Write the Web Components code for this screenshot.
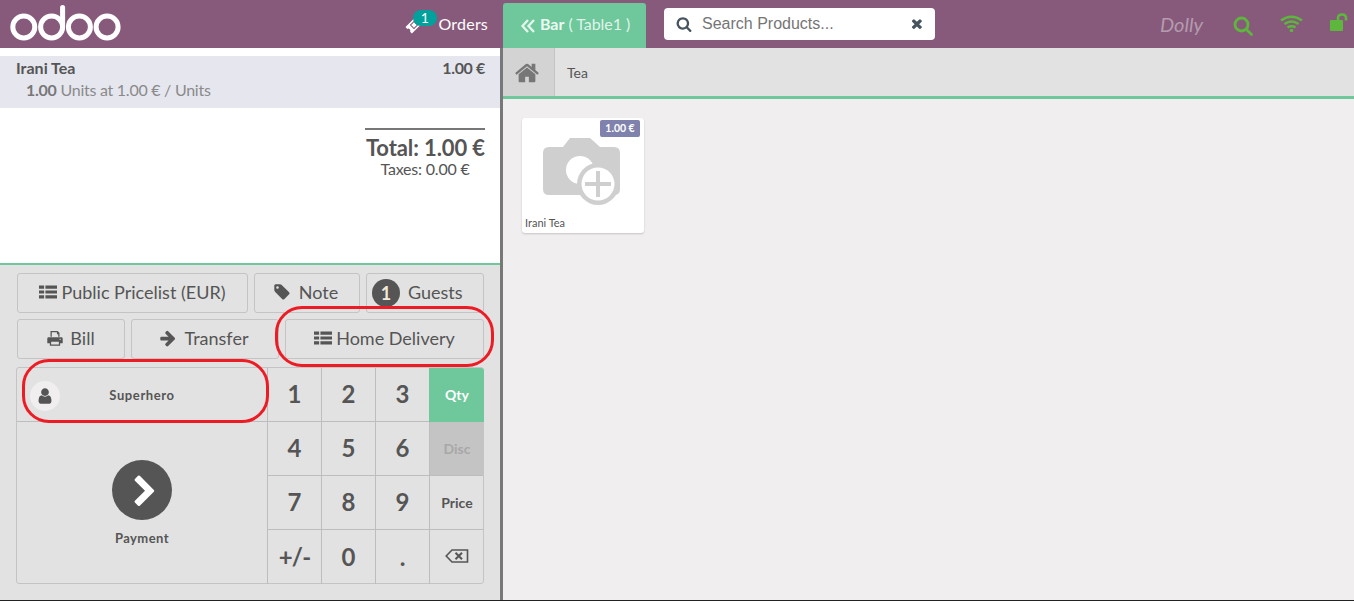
<!DOCTYPE html>
<html>
<head>
<meta charset="utf-8">
<title>POS</title>
<style>
  html, body { margin: 0; height: 100%; overflow: hidden; }
  body { font-family: Lato, "Liberation Sans", sans-serif; color: #555; background: #fff; }
</style>
</head>
<body>
<pos-app></pos-app>

<script>
const ICONS = {
    home: 'M1472 992v480q0 26-19 45t-45 19h-384v-384h-256v384h-384q-26 0-45-19t-19-45v-480q0-1 .5-3t.5-3l575-474 575 474q1 2 1 6zm223-69l-62 74q-8 9-21 11h-3q-13 0-21-7l-692-577-692 577q-12 8-24 7-13-2-21-11l-62-74q-8-10-7-23.500t11-21.500l719-599q32-26 76-26t76 26l244 204v-195q0-14 9-23t23-9h192q14 0 23 9t9 23v408l219 182q10 8 11 21.500t-7 23.500z',
    search: 'M1216 832q0-185-131.500-316.500t-316.500-131.500-316.500 131.500-131.500 316.500 131.500 316.500 316.500 131.500 316.500-131.500 131.500-316.500zm512 832q0 52-38 90t-90 38q-54 0-90-38l-343-342q-179 124-399 124-143 0-273.500-55.500t-225-150-150-225-55.500-273.500 55.500-273.500 150-225 225-150 273.500-55.500 273.500 55.500 225 150 150 225 55.500 273.500q0 220-124 399l343 343q37 37 37 90z',
    user: 'M1536 1399q0 109-62.500 187t-150.500 78h-854q-88 0-150.500-78t-62.500-187q0-85 8.500-160.500t31.500-152 58.500-131 94-89 134.500-34.500q131 128 313 128t313-128q76 0 134.500 34.500t94 89 58.500 131 31.500 152 8.500 160.500zm-256-887q0 159-112.500 271.500t-271.500 112.500-271.500-112.500-112.500-271.500 112.500-271.500 271.500-112.500 271.500 112.500 112.500 271.500z',
    chevron: 'M1363 877l-742 742q-19 19-45 19t-45-19l-166-166q-19-19-19-45t19-45l531-531-531-531q-19-19-19-45t19-45l166-166q19-19 45-19t45 19l742 742q19 19 19 45t-19 45z',
    arrow: 'M1600 960q0 54-37 91l-651 651q-39 37-91 37-51 0-90-37l-75-75q-38-38-38-91t38-91l293-293h-704q-52 0-84.500-37.500t-32.500-90.500v-128q0-53 32.500-90.500t84.500-37.500h704l-293-294q-38-36-38-90t38-90l75-75q38-38 90-38 53 0 91 38l651 651q37 35 37 90z',
    times: 'M1298 1214q0 40-28 68l-136 136q-28 28-68 28t-68-28l-294-294-294 294q-28 28-68 28t-68-28l-136-136q-28-28-28-68t28-68l294-294-294-294q-28-28-28-68t28-68l136-136q28-28 68-28t68 28l294 294 294-294q28-28 68-28t68 28l136 136q28 28 28 68t-28 68l-294 294 294 294q28 28 28 68z',
    tag: 'M576 448q0-53-37.500-90.500t-90.500-37.500-90.500 37.500-37.500 90.500 37.500 90.500 90.500 37.500 90.500-37.500 37.500-90.500zm1067 576q0 53-37 90l-491 492q-39 37-91 37-53 0-90-37l-715-716q-38-37-64.500-101t-26.500-117v-416q0-52 38-90t90-38h416q53 0 117 26.500t102 64.500l715 714q37 39 37 91z',
    list: 'M0 256h512v320H0zM640 256h1152v320H640zM0 736h512v320H0zM640 736h1152v320H640zM0 1216h512v320H0zM640 1216h1152v320H640z',
    print: 'M448 192h704l192 192v384h-128V512h-128V320H576v448H448zM256 832h1280q128 0 128 128v448h-256v256H384v-256H128V960q0-128 128-128zM512 1280v256h768v-256zM1408 960a64 64 0 1 0 .1 0z'
};

function icon(name, size, fill = 'currentColor') {
    return `<svg width="${size}" height="${size}" viewBox="0 0 1792 1792" fill="${fill}" fill-rule="evenodd"><path d="${ICONS[name]}"/></svg>`;
}

class PosHeader extends HTMLElement {
    constructor() {
        super();
        this.attachShadow({ mode: 'open' });
        this.shadowRoot.innerHTML = `
            <style>
                :host { display: flex; height: 48px; background: #875a7b; color: #fff; align-items: stretch; flex: none; }
                .logo { margin: 0 0 0 10px; width: 112px; height: 48px; display: block; flex: none; }
                .orders { margin-left: 283px; display: flex; align-items: center; position: relative; font-size: 16px; width: 83px; margin-right: 15px; justify-content: flex-end; padding-bottom: 1px; box-sizing: border-box; height: 48px; letter-spacing: .2px; flex: none; }
                .ticket { position: absolute; left: 0; top: 16px; }
                .badge { position: absolute; left: 8px; top: 10px; width: 24px; height: 16px; border-radius: 8px; background: #00a09d; font: 14px/15px Lato, sans-serif; text-align: center; }
                .tab { width: 143px; margin-top: 3px; background: #6ec89b; border-radius: 3px 3px 0 0; box-sizing: border-box; padding: 0 0 4px 17px; display: flex; align-items: center; gap: 4px; font-size: 16px; letter-spacing: -.05px; color: rgba(255,255,255,.8); flex: none; }
                .tab b { color: rgba(255,255,255,.9); }
                .search { margin: 8px 0 0 18px; width: 271px; height: 32px; background: #fff; border-radius: 4px; color: #5f6b76; display: flex; align-items: center; box-sizing: border-box; padding: 0 9px 0 12px; font: 16px "Liberation Sans", Arial, sans-serif; flex: none; }
                .search span { margin-left: 10px; flex: 1; color: #757575; }
                .search svg { color: #47535e; }
                .status { margin-left: auto; display: flex; align-items: center; }
                .dolly { font-style: italic; font-size: 20px; color: #b49bae; margin-right: 30px; margin-left: 1px; }
                .status svg { display: block; }
            </style>
            <svg class="logo" viewBox="0 0 112 48" fill="none" stroke="#fff" stroke-width="5">
                <circle cx="13.800" cy="27" r="11"/>
                <circle cx="41.600" cy="27" r="11"/>
                <path d="M52.600 27V7.500" stroke-linecap="round"/>
                <circle cx="69.400" cy="27" r="11"/>
                <circle cx="97.100" cy="27" r="11"/>
            </svg>
            <div class="orders">
                <svg class="ticket" width="18" height="18" viewBox="0 0 18 18">
                    <g transform="rotate(-45 9 9)">
                        <path d="M1.500 4.500h15v2.500q-1.500.5-1.500 2t1.500 2v2.500h-15v-2.500q1.500-.5 1.500-2t-1.500-2z" fill="#fff"/>
                        <path d="M6.500 6.500h5v5h-5z" fill="none" stroke="#875a7b" stroke-width="1"/>
                    </g>
                </svg>
                <span class="badge">1</span>
                <span>Orders</span>
            </div>
            <div class="tab">
                <svg width="16" height="16" viewBox="0 0 16 16" fill="none" stroke="currentColor" stroke-width="2.400" style="margin-top:4px"><path d="M8 2 2.500 8 8 14M14 2 8.500 8l5.500 6"/></svg>
                <span><b>Bar</b> ( Table1 )</span>
            </div>
            <div class="search">
                ${icon('search', 16)}
                <span>Search Products...</span>
                ${icon('times', 15)}
            </div>
            <div class="status">
                <span class="dolly">Dolly</span>
                <svg width="20" height="20" viewBox="0 0 20 20" fill="none" stroke="#5cb73c" stroke-width="2.800" style="margin-right:27px;margin-top:3px"><circle cx="8.500" cy="8.500" r="6.500"/><path d="m13.500 13.500 5 5" stroke-linecap="round"/></svg>
                <svg width="23" height="18" viewBox="0 0 23 18" fill="none" stroke="#5cb73c" stroke-width="2.600" style="margin-right:27px;margin-top:-1px"><path d="M1 5.500q10.500-7.500 21 0M4.500 9q7-5 14 0M7.500 12.500q4-2.500 8 0"/><circle cx="11.500" cy="15.500" r="1.800" fill="#5cb73c" stroke="none"/></svg>
                <svg width="24" height="19" viewBox="0 0 24 19" style="margin-top:-3px"><rect x="0" y="7" width="13" height="11" rx="1" fill="#5cb73c"/><path d="M8 8V5q0-3.500 4-3.500T16 5v2.500" fill="none" stroke="#5cb73c" stroke-width="2.600"/></svg>
            </div>
        `;
    }
}

class OrderLine extends HTMLElement {
    constructor() {
        super();
        this.attachShadow({ mode: 'open' });
        this.shadowRoot.innerHTML = `
            <style>
                :host { display: block; margin-top: 8px; height: 52px; background: #e6e6ef; box-sizing: border-box; padding: 1px 15px 0 16px; color: #555; font-size: 16px; line-height: 22px; }
                .top { display: flex; justify-content: space-between; font-weight: 700; }
                .price { letter-spacing: -.35px; }
                .info { padding-left: 10px; color: #8a8a8a; line-height: 21px; letter-spacing: -.26px; }
                .info b { color: #777; }
            </style>
            <div class="top"><span><slot name="name"></slot></span><span class="price"><slot name="price"></slot></span></div>
            <div class="info"><b><slot name="qty"></slot></b> <slot name="detail"></slot></div>
        `;
    }
}

class OrderSummary extends HTMLElement {
    constructor() {
        super();
        this.attachShadow({ mode: 'open' });
        this.shadowRoot.innerHTML = `
            <style>
                :host { display: block; width: 120px; margin: 20px 15px 0 auto; border-top: 2px solid #777; box-sizing: border-box; text-align: right; color: #555; padding-top: 5px; }
                .total { font-size: 22px; line-height: 26px; font-weight: 700; white-space: nowrap; letter-spacing: -.1px; }
                .tax { font-size: 16px; line-height: 16px; text-align: center; white-space: nowrap; letter-spacing: -.2px; }
            </style>
            <div class="total">Total: 1.00 €</div>
            <div class="tax">Taxes: 0.00 €</div>
        `;
    }
}

class ControlButton extends HTMLElement {
    constructor() {
        super();
        this.attachShadow({ mode: 'open' });
        this.shadowRoot.innerHTML = `
            <style>
                :host { display: flex; align-items: center; justify-content: center; gap: 6px; box-sizing: border-box; height: 40px; border: 1px solid #c4c4c4; border-radius: 3px; font-size: 18px; color: #555; white-space: nowrap; padding-bottom: 2px; }
                ::slotted(svg) { display: block; }
            </style>
            <slot></slot>
        `;
    }
}

class NumPad extends HTMLElement {
    constructor() {
        super();
        this.attachShadow({ mode: 'open' });
        const keys = ['1', '2', '3', 'Qty', '4', '5', '6', 'Disc', '7', '8', '9', 'Price', '+/-', '0', '.', 'del'];
        const cells = keys.map((k, i) => {
            let cls = i % 4 === 3 ? 'key mode' : 'key';
            if (k === 'Qty') cls += ' on';
            if (k === 'Disc') cls += ' off';
            if (k === '+/-') cls += ' sign';
            const inner = k === 'del'
                ? `<svg width="24" height="14" viewBox="0 0 24 14" fill="none" stroke="#555" stroke-width="1.600" style="margin:-1px 1px 0 0"><path d="M7 1h15.500v12H7L1.200 7z"/><path d="m10.500 3.800 6.500 6.500m0-6.500-6.500 6.500" stroke-width="2"/></svg>`
                : k;
            return `<div class="${cls}">${inner}</div>`;
        }).join('');
        this.shadowRoot.innerHTML = `
            <style>
                :host { display: grid; grid-template-columns: repeat(4, 54px); grid-auto-rows: 54px; }
                .key { display: flex; align-items: center; justify-content: center; box-sizing: border-box; border-left: 1px solid #bdbdbd; border-bottom: 1px solid #bdbdbd; font-size: 24px; color: #555; font-weight: 700; padding-bottom: 2px; }
                .key:nth-last-child(-n+4) { border-bottom: 0; }
                .sign { letter-spacing: -.8px; }
                .mode { font-size: 14px; font-weight: 700; padding: 0 0 1px 1px; }
                .on { background: #6ec89b; color: #fff; border-radius: 0 3px 0 0; border-left: 0; border-bottom: 0; margin-right: -1px; }
                .off { background: #c4c4c4; color: #a8a8a8; }
            </style>
            ${cells}
        `;
    }
}

class PosActions extends HTMLElement {
    constructor() {
        super();
        this.attachShadow({ mode: 'open' });
        this.shadowRoot.innerHTML = `
            <style>
                :host { display: flex; box-sizing: border-box; width: 468px; height: 217px; margin-left: 16px; border: 1px solid #c4c4c4; border-radius: 3px; }
                .left { width: 250px; display: flex; flex-direction: column; flex: none; }
                .customer { height: 54px; box-sizing: border-box; border-bottom: 1px solid #bdbdbd; display: flex; align-items: center; position: relative; justify-content: center; font-size: 13px; font-weight: 700; letter-spacing: .6px; color: #555; }
                .avatar { position: absolute; left: 13px; top: 13px; width: 30px; height: 30px; border-radius: 50%; background: #f0eeee; display: flex; align-items: center; justify-content: center; }
                .pay { flex: 1; display: flex; flex-direction: column; align-items: center; padding-top: 38px; font-size: 13px; font-weight: 700; letter-spacing: .45px; }
                .circle { width: 60px; height: 60px; border-radius: 50%; background: #555; color: #fff; display: flex; align-items: center; justify-content: center; margin-bottom: 10px; }
                .circle svg { margin: 3px 0 0 5px; }
            </style>
            <div class="left">
                <div class="customer">
                    <span class="avatar">${icon('user', 18, '#555')}</span>
                    <span>Superhero</span>
                </div>
                <div class="pay">
                    <span class="circle">${icon('chevron', 34)}</span>
                    <span>Payment</span>
                </div>
            </div>
            <num-pad></num-pad>
        `;
    }
}

class LeftPane extends HTMLElement {
    constructor() {
        super();
        this.attachShadow({ mode: 'open' });
        this.shadowRoot.innerHTML = `
            <style>
                :host { display: flex; flex-direction: column; width: 500px; background: #e2e2e2; flex: none; }
                .order { height: 215px; background: #fff; border-bottom: 2px solid #6ec89b; flex: none; overflow: hidden; }
                .controls { padding: 8px 16px 0 17px; display: flex; flex-direction: column; gap: 6px; margin-bottom: 8px; }
                .row { display: flex; gap: 6px; }
            </style>
            <div class="order">
                <order-line>
                    <span slot="name">Irani Tea</span>
                    <span slot="price">1.00 €</span>
                    <span slot="qty">1.00</span>
                    <span slot="detail">Units at 1.00 € / Units</span>
                </order-line>
                <order-summary></order-summary>
            </div>
            <div class="controls">
                <div class="row">
                    <control-button style="width:231px">${icon('list', 18)}<span style="margin-left:-2px">Public Pricelist (EUR)</span></control-button>
                    <control-button style="width:106px;padding-right:3px">${icon('tag', 18)}<span style="margin-left:2px">Note</span></control-button>
                    <control-button style="width:118px;gap:8px;justify-content:flex-start;padding-left:5px"><span style="width:28px;height:28px;border-radius:50%;background:#555;color:#f4e9d8;font-weight:700;display:flex;align-items:center;justify-content:center;margin-top:2px">1</span><span>Guests</span></control-button>
                </div>
                <div class="row">
                    <control-button style="width:108px;padding-right:1px">${icon('print', 18)}<span>Bill</span></control-button>
                    <control-button style="width:148px;padding-right:3px">${icon('arrow', 18)}<span style="margin-left:2px">Transfer</span></control-button>
                    <control-button style="width:199px;gap:4px">${icon('list', 18)}<span>Home Delivery</span></control-button>
                </div>
            </div>
            <pos-actions></pos-actions>
        `;
    }
}

class ProductCard extends HTMLElement {
    constructor() {
        super();
        this.attachShadow({ mode: 'open' });
        this.shadowRoot.innerHTML = `
            <style>
                :host { display: block; position: relative; width: 122px; height: 115px; background: #fff; border-radius: 3px; box-shadow: 0 1px 2px rgba(0,0,0,.18); color: #555; font-size: 11px; }
                .price { position: absolute; top: 2px; right: 4px; width: 40px; height: 17px; box-sizing: border-box; background: #7f82ac; color: #fff; border-radius: 2px; font-size: 10.500px; font-weight: 700; line-height: 17px; text-align: center; }
                .pic { position: absolute; left: 20px; top: 18px; }
                .name { position: absolute; left: 3px; bottom: 4px; line-height: 13px; }
            </style>
            <svg class="pic" width="82" height="74" viewBox="0 0 82 74">
                <path d="M1 17q0-6 6-6h14l7-9h20l10 9h14q6 0 6 6v36q0 6-6 6H7q-6 0-6-6z" fill="#cfcfcf"/>
                <circle cx="38" cy="34" r="14" fill="#fff"/>
                <circle cx="56" cy="48" r="21" fill="#cfcfcf"/>
                <circle cx="56" cy="48" r="16.500" fill="#fff"/>
                <path d="M54 35h4v11h11v4H58v11h-4V50H43v-4h11z" fill="#cfcfcf"/>
            </svg>
            <span class="price"><slot name="price"></slot></span>
            <span class="name"><slot name="name"></slot></span>
        `;
    }
}

class RightPane extends HTMLElement {
    constructor() {
        super();
        this.attachShadow({ mode: 'open' });
        this.shadowRoot.innerHTML = `
            <style>
                :host { display: flex; flex-direction: column; flex: 1; min-width: 0; background: #f0eeee; border-left: 3px solid #787878; }
                .crumbs { display: flex; height: 51px; box-sizing: border-box; background: #e2e2e2; border-bottom: 3px solid #6ec89b; flex: none; align-items: stretch; }
                .home { width: 52px; background: #d3d3d3; border-right: 1px solid #c4c4c4; box-sizing: border-box; display: flex; align-items: center; justify-content: center; color: #777; padding: 1px 3px 0 0; }
                .tea { display: flex; align-items: center; padding-left: 12px; font-size: 14px; color: #555; }
                .list { padding: 19px 0 0 19px; display: flex; }
            </style>
            <div class="crumbs">
                <div class="home">${icon('home', 26)}</div>
                <div class="tea">Tea</div>
            </div>
            <div class="list">
                <product-card><span slot="price">1.00 €</span><span slot="name">Irani Tea</span></product-card>
            </div>
        `;
    }
}

class PosApp extends HTMLElement {
    constructor() {
        super();
        this.attachShadow({ mode: 'open' });
        this.shadowRoot.innerHTML = `
            <style>
                :host { display: flex; flex-direction: column; height: 601px; width: 1354px; position: relative; overflow: hidden; box-sizing: border-box; border-bottom: 1px solid #222; }
                .body { display: flex; flex: 1; min-height: 0; }
                .ring { position: absolute; box-sizing: border-box; border: 3px solid #ed1c24; border-radius: 27px; pointer-events: none; }
            </style>
            <pos-header></pos-header>
            <div class="body">
                <left-pane></left-pane>
                <right-pane></right-pane>
            </div>
            <div class="ring" style="left:275px;top:306px;width:219px;height:61px"></div>
            <div class="ring" style="left:22px;top:359px;width:247px;height:64px"></div>
        `;
    }
}

customElements.define('pos-header', PosHeader);
customElements.define('order-line', OrderLine);
customElements.define('order-summary', OrderSummary);
customElements.define('control-button', ControlButton);
customElements.define('num-pad', NumPad);
customElements.define('pos-actions', PosActions);
customElements.define('left-pane', LeftPane);
customElements.define('product-card', ProductCard);
customElements.define('right-pane', RightPane);
customElements.define('pos-app', PosApp);
</script>
</body>
</html>
